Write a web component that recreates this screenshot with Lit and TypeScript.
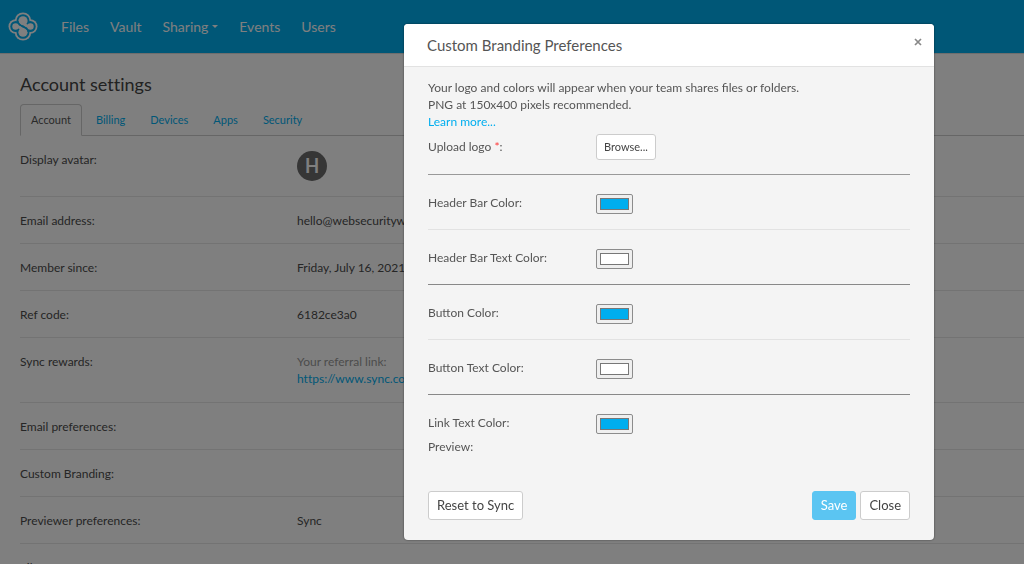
import { LitElement, html, css, svg, nothing } from "lit";
import { customElement, state } from "lit/decorators.js";

const logo = svg`
  <g fill="#fff">
    <circle cx="15" cy="8.6" r="8.2"/><circle cx="15" cy="20.4" r="8.2"/>
    <circle cx="7.8" cy="14.5" r="7.3"/><circle cx="22.2" cy="14.5" r="7.3"/>
  </g>
  <g fill="#00aeef">
    <circle cx="15" cy="8.6" r="6.4"/><circle cx="15" cy="20.4" r="6.4"/>
    <circle cx="7.8" cy="14.5" r="5.5"/><circle cx="22.2" cy="14.5" r="5.5"/>
  </g>
  <g fill="#fff">
    <circle cx="15" cy="8.8" r="4.6"/><circle cx="15" cy="20.2" r="4.6"/>
    <circle cx="7.6" cy="14.5" r="3.3"/><circle cx="22.4" cy="14.5" r="3.3"/>
  </g>
  <path d="M16 11.500C17.500 14 19.500 14.500 22 14.500M14 17.500C12.500 15 10.500 14.500 8 14.500" fill="none" stroke="#fff" stroke-width="3"/>
  <path d="M9.800 9C9.800 15 20.200 14 20.200 20" fill="none" stroke="#00aeef" stroke-width="1.500"/>`;

interface Setting { label: string; kind?: string; value?: string }

const settings: Setting[] = [
  { label: "Display avatar:", kind: "avatar", value: "H" },
  { label: "Email address:", value: "hello@websecurityworld" },
  { label: "Member since:", value: "Friday, July 16, 2021" },
  { label: "Ref code:", value: "6182ce3a0" },
  { label: "Sync rewards:", kind: "referral", value: "https://www.sync.com" },
  { label: "Email preferences:" },
  { label: "Custom Branding:" },
  { label: "Previewer preferences:", value: "Sync" },
  { label: "File" },
];

const colors = [
  { id: "header", label: "Header Bar Color:", value: "#00aeef", end: false },
  { id: "headerText", label: "Header Bar Text Color:", value: "#ffffff", end: true },
  { id: "button", label: "Button Color:", value: "#00aeef", end: false },
  { id: "buttonText", label: "Button Text Color:", value: "#ffffff", end: true },
  { id: "link", label: "Link Text Color:", value: "#00aeef", end: false },
];

@customElement("branding-dialog")
class BrandingDialog extends LitElement {
  static styles = css`
    :host { display: block; width: 530px; max-width: 100%; }
    .dialog {
      background: #f4f4f4; border-radius: 4px; overflow: hidden;
      box-shadow: 0 0 2px rgba(0, 0, 0, .6);
    }
    .head {
      display: flex; justify-content: space-between; align-items: flex-start;
      padding: 11px 11px 11px 23px; background: #fff; border-bottom: 1px solid #e2e2e2;
    }
    h2 { margin: 0; font-size: 15px; line-height: 20px; font-weight: 400; color: #555; }
    button { font: inherit; cursor: pointer; }
    .x { border: 0; background: none; padding: 0; width: 10px; height: 14px; display: grid; place-items: center; }
    .body { padding: 12px 24px 20px; }
    p { margin: 0; }
    a { color: #00aeef; text-decoration: none; }
    .row { display: grid; grid-template-columns: 168px 1fr; align-items: start; }
    .upload { padding: 4px 0 14px; border-bottom: 1px solid #999; }
    .upload .label { padding-top: 4px; }
    .req { color: #f33; }
    .color { padding: 19px 0 15px; border-bottom: 1px solid #e2e2e2; }
    .color.end { border-color: #888; }
    .color.last { border: 0; padding-bottom: 4px; }
    input {
      appearance: none; box-sizing: border-box; width: 37px; height: 20px; margin: 0;
      padding: 3px; border: 1px solid #8c8c8c; border-radius: 2px; background: #efefef;
    }
    input::-webkit-color-swatch-wrapper { padding: 0; }
    input::-webkit-color-swatch { border: 1px solid #777; border-radius: 0; }
    .btn {
      border: 1px solid #ccc; border-radius: 3px; background: #fff; color: #444;
      font-size: 13px; line-height: 18px; padding: 4px 8px 5px;
    }
    .btn.small { font-size: 11px; line-height: 16px; padding: 4px 7px; justify-self: start; }
    .btn.save { background: #5bc5f2; border-color: #5bc5f2; color: #fff; }
    .foot { display: flex; gap: 4px; padding-top: 36px; }
    .foot .btn:first-child { margin-right: auto; }
  `;
  render() {
    return html`
      <section class="dialog" role="dialog" aria-labelledby="title">
        <header class="head">
          <h2 id="title">Custom Branding Preferences</h2>
          <button class="x" aria-label="Close dialog">
            <svg width="8" height="8" viewBox="0 0 8 8"><path d="M1 1l6 6M7 1l-6 6" stroke="#888" stroke-width="1.700"/></svg>
          </button>
        </header>
        <div class="body">
          <p>Your logo and colors will appear when your team shares files or folders.</p>
          <p>PNG at 150x400 pixels recommended.</p>
          <p><a href="#learn">Learn more...</a></p>
          <div class="row upload">
            <label class="label" for="browse">Upload logo <span class="req">*</span>:</label>
            <button class="btn small" id="browse">Browse...</button>
          </div>
          ${colors.map((c, i) => html`
            <div class="row color ${c.end ? "end" : ""} ${i === colors.length - 1 ? "last" : ""}">
              <label for=${c.id}>${c.label}</label>
              <input type="color" id=${c.id} .value=${c.value}>
            </div>`)}
          <p>Preview:</p>
          <footer class="foot">
            <button class="btn">Reset to Sync</button>
            <button class="btn save">Save</button>
            <button class="btn">Close</button>
          </footer>
        </div>
      </section>`;
  }
}

@customElement("app-root")
class AppRoot extends LitElement {
  static styles = css`
    :host {
      display: block; height: 100vh; overflow: hidden; background: #fff; color: #555;
      font: 12px/17px Lato, "Open Sans", sans-serif;
    }
    a { color: #00aeef; text-decoration: none; }
    .bar { display: flex; align-items: center; height: 54px; padding-left: 8px; background: #00aeef; border-bottom: 1px solid #ddd; box-sizing: border-box; }
    .logo { display: block; }
    .nav { display: flex; gap: 21px; margin-left: 23px; font-size: 14px; line-height: 20px; }
    .nav a { color: #fff; display: flex; align-items: center; gap: 4px; }
    .caret { border: 3px solid transparent; border-top-color: #fff; border-bottom: 0; }
    .page { padding: 19px 0 0 20px; font-variant-ligatures: none; }
    h1 { margin: 0; font-size: 18px; line-height: 22px; font-weight: 400; color: #444; }
    .tabs { display: flex; gap: 3px; margin-top: 9px; border-bottom: 1px solid #ccc; font-size: 11px; }
    .tab { padding: 6px 10px 7px; border: 1px solid transparent; margin-bottom: -1px; }
    .tab.on { color: #555; border-color: #ccc; border-bottom-color: #fff; border-radius: 4px 4px 0 0; background: #fff; }
    .list { margin: 0; }
    .item { display: grid; grid-template-columns: 277px 1fr; padding: 15px 0 14px; border-bottom: 1px solid #e6e6e6; }
    .item.avatar-row, .item.referral-row { padding-bottom: 15px; }
    .item dd { margin: 0; }
    .item dt, .item dd { min-width: 0; color: #4c4c4c; }
    .item .muted { color: #999; }
    .avatar { display: grid; place-items: center; width: 30px; height: 30px; border-radius: 50%; background: #6c6c6c; color: #fff; font: 500 20px/30px Roboto, sans-serif; }
    .overlay { position: fixed; inset: 0; display: flex; justify-content: flex-end; align-items: flex-start; padding: 24px 90px 0 24px; background: rgba(0, 0, 0, .5); }
  `;
  @state() tab = "Account";
  value(s: Setting) {
    if (s.kind === "avatar") return html`<span class="avatar">${s.value}</span>`;
    if (s.kind === "referral") return html`<div class="muted">Your referral link:</div><a href="#refer">${s.value}</a>`;
    return s.value ?? nothing;
  }
  render() {
    return html`
      <header class="bar">
        <a href="#home" aria-label="Home"><svg class="logo" width="30" height="29" viewBox="0 0 30 29">${logo}</svg></a>
        <nav class="nav">
          ${["Files", "Vault", "Sharing", "Events", "Users"].map(n => html`
            <a href="#${n}">${n}${n === "Sharing" ? html`<span class="caret"></span>` : nothing}</a>`)}
        </nav>
      </header>
      <main class="page">
        <h1>Account settings</h1>
        <nav class="tabs">
          ${["Account", "Billing", "Devices", "Apps", "Security"].map(t => html`
            <a class="tab ${t === this.tab ? "on" : ""}" href="#${t}" @click=${() => (this.tab = t)}>${t}</a>`)}
        </nav>
        <dl class="list">
          ${settings.map(s => html`<div class="item ${s.kind ? `${s.kind}-row` : ""}"><dt>${s.label}</dt><dd>${this.value(s)}</dd></div>`)}
        </dl>
      </main>
      <div class="overlay"><branding-dialog></branding-dialog></div>`;
  }
}
